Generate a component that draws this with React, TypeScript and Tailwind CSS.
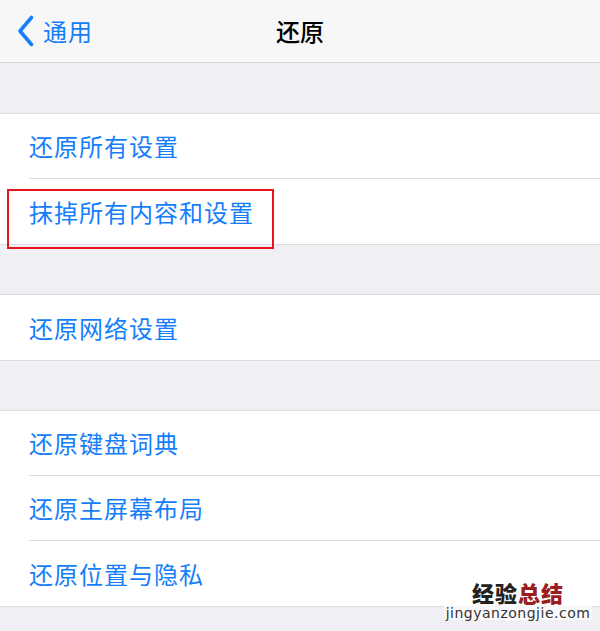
import React from "react";

const font = { fontFamily: '"Noto Sans CJK SC", "Noto Sans", sans-serif' };

const Row = ({ label, last }: { label: string; last?: boolean }) => (
  <div className="h-[65px] pl-[29px] bg-white">
    <div className={`h-full flex items-center ${last ? "" : "border-b border-[#dcdce0]"}`}>
      <span className="text-[24px] leading-none text-[#157efb] tracking-[1px]">{label}</span>
    </div>
  </div>
);

const Group = ({ children }: { children: React.ReactNode }) => (
  <div className="bg-white border-y border-[#dcdce0]">{children}</div>
);

export default function App() {
  return (
    <div className="relative w-[600px] h-[631px] bg-[#efeff4] overflow-hidden" style={font}>
      <div className="h-[63px] bg-[#f7f7f8] border-b border-[#d8d8dc] relative flex items-center">
        <div className="flex items-center pl-[17px] text-[#157efb]">
          <svg width="17" height="32" viewBox="0 0 17 32" fill="none">
            <path d="M14.5 2.5L3 16l11.5 13.5" stroke="#157efb" strokeWidth="3.6" strokeLinecap="round" strokeLinejoin="round" />
          </svg>
          <span className="ml-[9px] text-[24px] leading-none tracking-[1px]">通用</span>
        </div>
        <span className="absolute left-1/2 -translate-x-1/2 text-[24px] leading-none font-medium text-black">还原</span>
      </div>

      <div className="h-[50px]" />
      <Group>
        <Row label="还原所有设置" />
        <Row label="抹掉所有内容和设置" last />
      </Group>

      <div className="h-[49px]" />
      <Group>
        <Row label="还原网络设置" last />
      </Group>

      <div className="h-[49px]" />
      <Group>
        <Row label="还原键盘词典" />
        <Row label="还原主屏幕布局" />
        <Row label="还原位置与隐私" last />
      </Group>

      {/* highlight box */}
      <div className="absolute left-[7px] top-[189px] w-[267px] h-[60px] border-2 border-[#e8141b]" />

      {/* watermark */}
      <div className="absolute left-[448px] top-[581px] w-[140px] flex flex-col items-center">
        <div className="text-[22px] leading-none font-black tracking-[1px]">
          <span className="text-[#222]">经验</span>
          <span className="text-[#9b1d1d]">总结</span>
        </div>
        <div className="mt-[3px] text-[14px] leading-none text-[#333] bg-white/70 px-[2px] tracking-[0.5px]" style={{ fontFamily: '"DejaVu Sans", sans-serif' }}>
          jingyanzongjie.com
        </div>
      </div>
    </div>
  );
}
